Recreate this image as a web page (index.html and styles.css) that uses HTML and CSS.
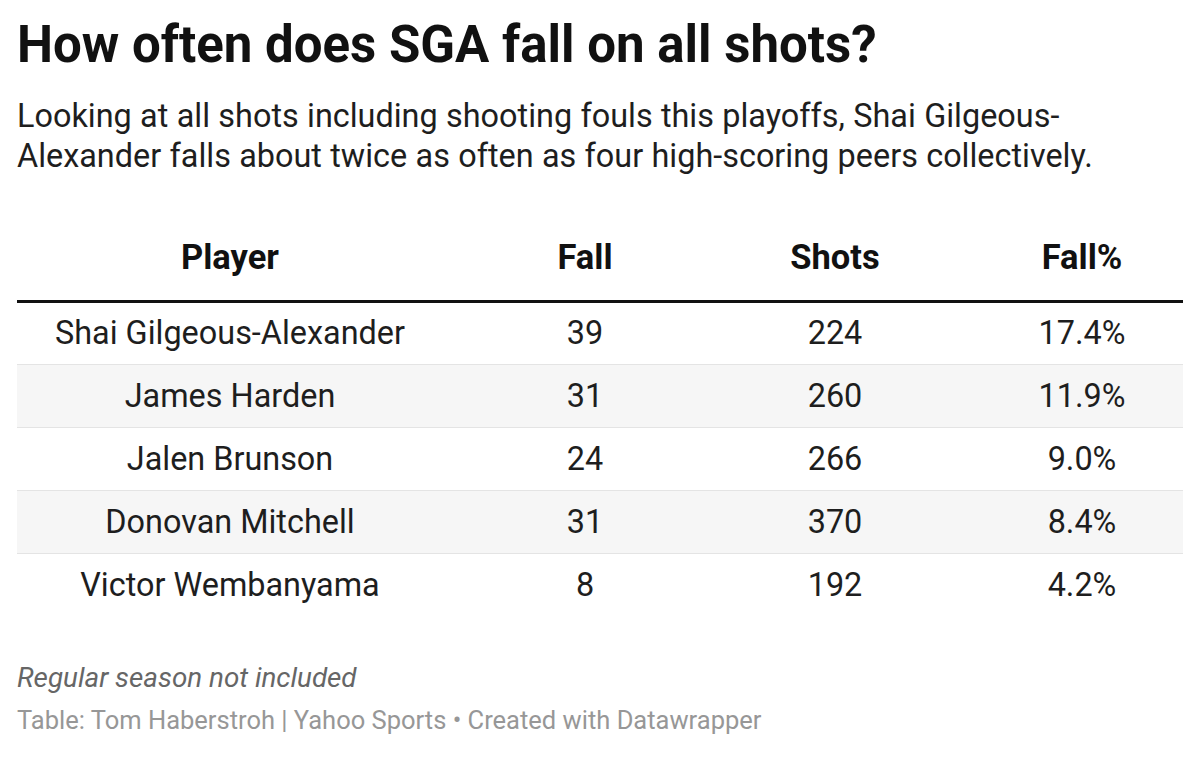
FILE: index.html
```html
<!DOCTYPE html>
<html lang="en">
<head>
<meta charset="utf-8">
<title>How often does SGA fall on all shots?</title>
<link rel="stylesheet" href="styles.css">
</head>
<body>
<main class="chart">
  <h1 class="title">How often does SGA fall on all shots?</h1>
  <p class="desc">Looking at all shots including shooting fouls this playoffs, Shai Gilgeous-<br>Alexander falls about twice as often as four high-scoring peers collectively.</p>
  <table class="data">
    <thead>
      <tr><th class="c-player">Player</th><th class="c-fall">Fall</th><th class="c-shots">Shots</th><th class="c-pct">Fall%</th></tr>
    </thead>
    <tbody>
      <tr><td class="c-player">Shai Gilgeous-Alexander</td><td class="c-fall">39</td><td class="c-shots">224</td><td class="c-pct">17.4%</td></tr>
      <tr><td class="c-player">James Harden</td><td class="c-fall">31</td><td class="c-shots">260</td><td class="c-pct">11.9%</td></tr>
      <tr><td class="c-player">Jalen Brunson</td><td class="c-fall">24</td><td class="c-shots">266</td><td class="c-pct">9.0%</td></tr>
      <tr><td class="c-player">Donovan Mitchell</td><td class="c-fall">31</td><td class="c-shots">370</td><td class="c-pct">8.4%</td></tr>
      <tr><td class="c-player">Victor Wembanyama</td><td class="c-fall">8</td><td class="c-shots">192</td><td class="c-pct">4.2%</td></tr>
    </tbody>
  </table>
  <p class="note">Regular season not included</p>
  <p class="source">Table: Tom Haberstroh | Yahoo Sports • Created with Datawrapper</p>
</main>
</body>
</html>
```
FILE: styles.css
```css
* { box-sizing: border-box; }
html, body { margin: 0; padding: 0; background: #fff; }
body { font-family: Roboto, "Liberation Sans", Arial, sans-serif; color: #181818; }
.chart { padding: 16px 16px 0 17px; width: 1199px; }
.title { margin: 0; font-size: 51px; line-height: 58px; font-weight: 700; color: #111; }
.desc { margin: 22px 0 0; font-size: 32.4px; line-height: 40px; color: #1e1e1e; }
.desc { word-spacing: 0.3px; }
.data { margin-top: 50px; width: 1166px; border-collapse: collapse; table-layout: fixed; font-size: 32.4px; }
.data th { font-weight: 700; font-size: 34.5px; height: 75px; padding: 0 0 11px; vertical-align: middle; border-bottom: 3px solid #111; color: #111; }
.data td { height: 63px; padding: 0; text-align: center; border-bottom: 1px solid #e4e4e4; color: #1e1e1e; }
.data tbody tr:nth-child(even) td { background: #f6f6f6; }
.data tbody tr:last-child td { border-bottom: none; }
.c-player { width: 426px; }
.c-fall { width: 284px; }
.c-shots { width: 216px; }
.c-pct { width: 240px; padding-left: 38px !important; }
.note { margin: 45px 0 0; font-size: 27.8px; line-height: 34px; font-style: italic; color: #666; }
.source { margin: 10px 0 0; font-size: 25.5px; line-height: 30px; color: #979797; }
```
